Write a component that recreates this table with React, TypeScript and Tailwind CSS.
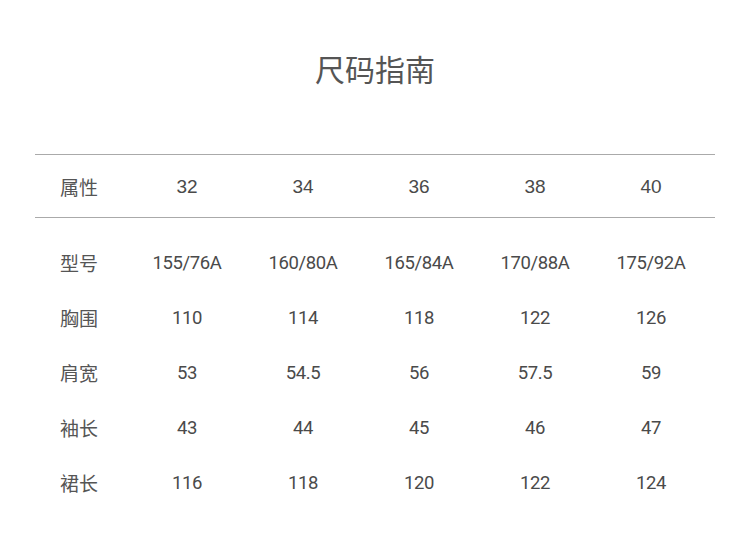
const cols = ["32", "34", "36", "38", "40"];

const rows: { label: string; values: string[] }[] = [
  { label: "型号", values: ["155/76A", "160/80A", "165/84A", "170/88A", "175/92A"] },
  { label: "胸围", values: ["110", "114", "118", "122", "126"] },
  { label: "肩宽", values: ["53", "54.5", "56", "57.5", "59"] },
  { label: "袖长", values: ["43", "44", "45", "46", "47"] },
  { label: "裙长", values: ["116", "118", "120", "122", "124"] },
];

const cjk = "font-['Noto_Sans_CJK_SC',sans-serif]";

export default function App() {
  return (
    <div className="w-[750px] h-[553px] bg-white text-[#555555]">
      <h1 className={`${cjk} pt-[47px] h-[154px] text-center text-[30px] leading-[42px] font-normal`}>
        尺码指南
      </h1>
      <div className="mx-[35px] w-[680px]">
        {/* header */}
        <div className="flex h-[64px] items-center border-y border-[#aaaaaa] pt-[2px]">
          <div className={`${cjk} w-[94px] pl-[25px] text-[19px]`}>属性</div>
          {cols.map((c) => (
            <div
              key={c}
              className="w-[116px] text-center font-['Liberation_Sans',sans-serif] text-[19px] text-[#4a4a4a]"
            >
              {c}
            </div>
          ))}
        </div>
        {/* body */}
        <div className="pt-[18px]">
          {rows.map((r) => (
            <div key={r.label} className="flex h-[55px] items-center">
              <div className={`${cjk} w-[94px] pl-[25px] text-[19px]`}>{r.label}</div>
              {r.values.map((v, i) => (
                <div
                  key={i}
                  className="w-[116px] text-center font-['Roboto',sans-serif] text-[18.5px] tracking-[-0.4px] text-[#4a4a4a]"
                >
                  {v}
                </div>
              ))}
            </div>
          ))}
        </div>
      </div>
    </div>
  );
}
